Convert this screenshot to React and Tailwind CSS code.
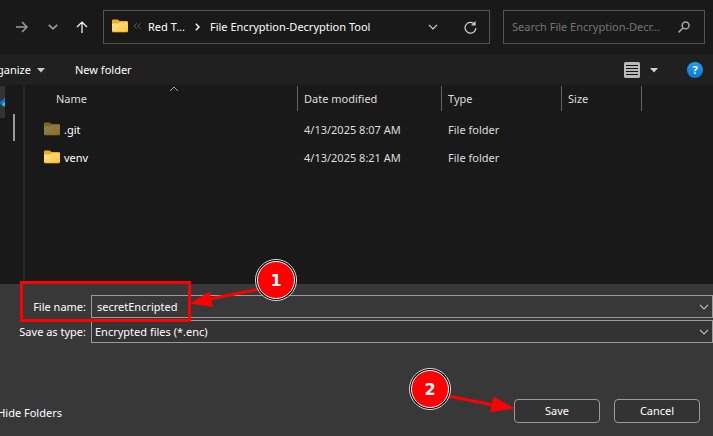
import React from "react";

function Chevron({ className = "" }) {
  return (
    <svg viewBox="0 0 10 6" className={`h-[6px] w-[10px] shrink-0 ${className}`} fill="none" stroke="currentColor">
      <path d="M1 0.8 5 4.8 9 0.8" strokeWidth="1.2" />
    </svg>
  );
}

function Caret({ className = "" }) {
  return (
    <svg viewBox="0 0 8 5" className={`h-[5px] w-[8px] shrink-0 ${className}`} fill="currentColor">
      <path d="M0 0h8L4 4.6z" />
    </svg>
  );
}

function Folder({ id, className = "" }) {
  return (
    <svg viewBox="0 0 16 14" className={`h-[14px] w-4 shrink-0 ${className}`}>
      <defs>
        <linearGradient id={id} x1="0" y1="0" x2="1" y2="1">
          <stop offset="0" stopColor="#ffe599" />
          <stop offset="1" stopColor="#fcc531" />
        </linearGradient>
      </defs>
      <path d="M0 1.6Q0 .5 1.1.5h4.2q.6 0 1 .4l1.3 1.1h7.3q1.1 0 1.1 1V8H0z" fill="#f5ae0b" />
      <path d="M0 4.6h5.6q.5 0 .9-.3l1.4-1h7q1.1 0 1.1 1v7.6q0 1-1.1 1H1.1q-1.1 0-1.1-1z" fill={`url(#${id})`} />
      <path d="M.3 12.6q.3.4.9.4h13.6q.6 0 .9-.4" fill="none" stroke="#e5a31a" strokeWidth=".7" />
    </svg>
  );
}

function NavigationBar() {
  return (
    <header className="flex h-[55px] items-center pr-2 pt-[10px] pb-[11px]">
      <div className="flex w-[103px] shrink-0 items-center pl-4">
        <button aria-label="Forward" className="text-[#9d9d9d]">
          <svg viewBox="0 0 12 12" className="h-3 w-3" fill="none" stroke="currentColor" strokeWidth="1.5">
            <path d="M0 6h11M6 1l5 5-5 5" />
          </svg>
        </button>
        <button aria-label="Recent locations" className="ml-5 text-[#9d9d9d]">
          <svg viewBox="0 0 10 6" className="h-[6px] w-[10px]" fill="none" stroke="currentColor" strokeWidth="1.7">
            <path d="M.8.8 5 4.8 9.2.8" />
          </svg>
        </button>
        <button aria-label="Up" className="ml-[18px] text-white">
          <svg viewBox="0 0 12 12" className="h-3 w-3" fill="none" stroke="currentColor" strokeWidth="1.2">
            <path d="M6 12V1M1 6l5-5 5 5" />
          </svg>
        </button>
      </div>
      <nav aria-label="Address" className="flex h-[34px] min-w-0 flex-1 items-center border border-[#535353] pl-2 pr-3 text-white">
        <Folder id="addr" className="mb-[2px]" />
        <svg viewBox="0 0 8 6" className="mb-[2px] ml-[5px] h-[6px] w-2 shrink-0" fill="none" stroke="#5f5f5f">
          <path d="M3.6.4 1 3l2.6 2.6M7.4.4 4.8 3l2.6 2.6" />
        </svg>
        <button className="ml-[7px] whitespace-nowrap">Red T...</button>
        <svg viewBox="0 0 5 8" className="ml-[10px] h-2 w-[5px] shrink-0" fill="none" stroke="currentColor" strokeWidth="1.5">
          <path d="M.8.8 4 4 .8 7.2" />
        </svg>
        <button className="ml-[10px] truncate">File Encryption-Decryption Tool</button>
        <button aria-label="Previous locations" className="ml-auto text-[#d5d5d5]"><Chevron /></button>
        <button aria-label="Refresh" className="ml-[26px] text-[#d5d5d5]">
          <svg viewBox="0 0 13 13" className="h-[13px] w-[13px]" fill="none" stroke="currentColor" strokeWidth="1.2">
            <path d="M11.9 7A5.4 5.4 0 1 1 10.6 3.2M11 .5v3.3H7.6" />
          </svg>
        </button>
      </nav>
      <form className="ml-[13px] flex h-[34px] w-[202px] shrink-0 items-center border border-[#535353] pl-2 pr-[14px]">
        <input
          type="text"
          aria-label="Search"
          placeholder="Search File Encryption-Decr..."
          className="min-w-0 flex-1 bg-transparent outline-none placeholder:text-[#757575]"
        />
        <svg viewBox="0 0 12 12" className="ml-2 h-3 w-3 shrink-0" fill="none" stroke="#a8a8a8" strokeWidth="1.5">
          <circle cx="7.6" cy="4.4" r="3.4" />
          <path d="M5.2 6.8.6 11.4" />
        </svg>
      </form>
    </header>
  );
}

function Toolbar() {
  return (
    <div className="flex h-[30px] items-center bg-[#202020] pr-[10px] text-white">
      <button className="flex items-center">
        <span className="flex w-[31px] justify-end overflow-hidden">ganize</span>
        <Caret className="ml-[6px] text-[#c8c8c8]" />
      </button>
      <button className="ml-[30px]">New folder</button>
      <button aria-label="Change view" className="ml-auto flex items-center">
        <svg viewBox="0 0 16 16" className="h-4 w-4">
          <rect width="16" height="16" rx="1.5" fill="#b9b9b9" />
          <path d="M2 3.500h12M2 6.500h12M2 9.500h12M2 12.500h12" stroke="#111" />
        </svg>
        <Caret className="ml-[10px] text-[#d0d0d0]" />
      </button>
      <button aria-label="Help" className="ml-[29px] flex h-4 w-4 items-center justify-center rounded-full bg-linear-to-b from-[#259bea] to-[#0877d2] font-bold">
        ?
      </button>
    </div>
  );
}

const files = [
  { name: ".git", date: "4/13/2025 8:07 AM", hidden: true },
  { name: "venv", date: "4/13/2025 8:21 AM", hidden: false },
];

function HeaderCell({ children, className = "" }) {
  return (
    <th className={`p-0 text-left align-top font-normal ${className}`}>
      <div className="relative flex h-[25px] items-center border-r border-[#636363] pl-[6px]">{children}</div>
    </th>
  );
}

function FileList() {
  return (
    <div className="flex min-h-[199px] pt-[1px]">
      <aside className="flex w-[23px] shrink-0 justify-between bg-[#191919] pr-2">
        <div className="flex h-8 w-[5px] items-center overflow-hidden bg-[#333]">
          <svg viewBox="0 0 5 10" className="h-[10px] w-[5px]">
            <path d="M5 .5Q3.500 1 3 3 .5 3.200 0 5.500 0 7.500 2 8h3z" fill="#0c78d4" />
            <path d="M5 5Q2.500 5.500 2 8 3 9.500 5 9.500z" fill="#35b3f3" />
          </svg>
        </div>
        <div className="mt-7 h-[27px] w-[2px] bg-[#9b9b9b]" />
      </aside>
      <div className="w-[2px] shrink-0 bg-[#2a2a2a]" />
      <div className="min-w-0 flex-1">
        <table className="w-full table-fixed border-collapse text-[#dedede]">
          <thead>
            <tr className="h-[30px]">
              <HeaderCell className="w-[273px]">
                <span className="pl-[25px]">Name</span>
                <svg viewBox="0 0 10 6" className="absolute top-0 left-[144px] h-[6px] w-[10px]" fill="none" stroke="#a8a8a8">
                  <path d="M1 5 5 1l4 4" />
                </svg>
              </HeaderCell>
              <HeaderCell className="w-36">Date modified</HeaderCell>
              <HeaderCell className="w-[120px]">Type</HeaderCell>
              <HeaderCell className="w-20">Size</HeaderCell>
              <td />
            </tr>
          </thead>
          <tbody>
            {files.map((file) => (
              <tr key={file.name} className="h-7">
                <td className="p-0 pl-[19px]">
                  <div className="flex items-center gap-1 text-white">
                    <Folder id={`folder${file.name.replace(".", "-")}`} className={file.hidden ? "mb-[2px] opacity-50" : "mb-[2px]"} />
                    {file.name}
                  </div>
                </td>
                <td className="p-0 pl-[6px]">{file.date}</td>
                <td className="p-0 pl-[6px]">File folder</td>
                <td />
                <td />
              </tr>
            ))}
          </tbody>
        </table>
      </div>
    </div>
  );
}

function SaveForm() {
  return (
    <form className="flex flex-1 flex-col bg-[#383838] pt-[11px] pb-[13px] text-white">
      <div className="grid grid-cols-[86px_1fr] items-center gap-x-[5px] gap-y-[2px]">
        <label htmlFor="file-name" className="text-right">File name:</label>
        <div className="flex h-[23px] items-center border border-[#9b9b9b] pr-[3px]">
          <input id="file-name" type="text" defaultValue="secretEncripted" className="min-w-0 flex-1 bg-transparent pl-[5px] outline-none" />
          <button type="button" aria-label="Show suggestions" className="text-[#bdbdbd]"><Chevron /></button>
        </div>
        <label htmlFor="save-type" className="text-right">Save as type:</label>
        <div className="relative flex h-[23px] items-center border border-[#9b9b9b] bg-[#333]">
          <select id="save-type" className="h-full w-full appearance-none bg-transparent pl-[3px] outline-none">
            <option>Encrypted files (*.enc)</option>
          </select>
          <Chevron className="pointer-events-none absolute right-[3px] text-[#bdbdbd]" />
        </div>
      </div>
      <div className="mt-auto flex items-center pr-[13px]">
        <button type="button" className="flex w-[62px] justify-end overflow-hidden whitespace-nowrap pt-1">Hide Folders</button>
        <button type="button" className="ml-auto h-6 w-[86px] rounded border border-[#9b9b9b] bg-[#333]">Save</button>
        <button type="button" className="ml-[14px] h-6 w-[86px] rounded border border-[#9b9b9b] bg-[#333]">Cancel</button>
      </div>
    </form>
  );
}

function StepBadge({ number, className }) {
  return (
    <div className={`absolute flex h-[42px] w-[42px] items-center justify-center rounded-full border border-[#ddd] bg-black p-px ${className}`}>
      <div className="flex h-full w-full items-center justify-center rounded-full border border-white bg-[#f00] pt-[2px] font-['DejaVu_Sans',sans-serif] text-base leading-4 font-bold text-white">
        {number}
      </div>
    </div>
  );
}

function Annotations() {
  return (
    <div className="pointer-events-none absolute inset-0">
      <div className="absolute top-[281px] left-5 h-[41px] w-[171px] border-3 border-[#f00]" />
      <svg className="absolute top-[280px] left-[190px] h-7 w-[70px]" viewBox="190 280 70 28">
        <path d="M260 289 210 299" stroke="#f00" strokeWidth="3" />
        <path d="M190 303.500 209.500 291.500 213 307z" fill="#f00" />
      </svg>
      <svg className="absolute top-[390px] left-[446px] h-6 w-[70px]" viewBox="446 390 70 24">
        <path d="M448 396 493 405" stroke="#f00" strokeWidth="3" />
        <path d="M515 408.500 493.500 396.500 490 412z" fill="#f00" />
      </svg>
      <StepBadge number="1" className="top-[259px] left-[255px]" />
      <StepBadge number="2" className="top-[368px] left-[409px]" />
    </div>
  );
}

export default function App() {
  return (
    <main className="relative flex min-h-screen flex-col overflow-hidden bg-[#191919] font-['Noto_Sans','Open_Sans',sans-serif] text-[11px] leading-4">
      <NavigationBar />
      <Toolbar />
      <FileList />
      <SaveForm />
      <Annotations />
    </main>
  );
}
